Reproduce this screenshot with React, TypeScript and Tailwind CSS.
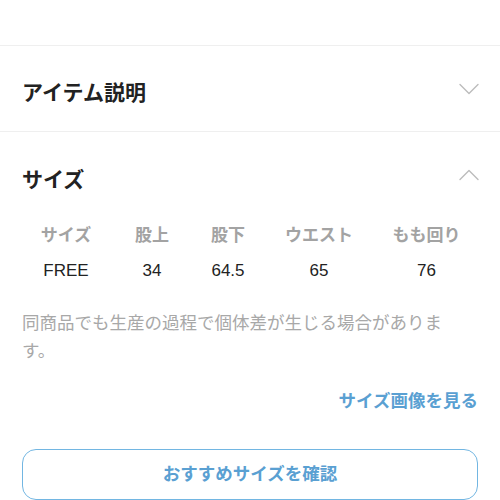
const font = {
  fontFamily: '"Liberation Sans", "Noto Sans CJK JP", sans-serif',
};

const sizeRows = [
  { label: "サイズ", value: "FREE" },
  { label: "股上", value: "34" },
  { label: "股下", value: "64.5" },
  { label: "ウエスト", value: "65" },
  { label: "もも回り", value: "76" },
];

function Chevron({ up = false }: { up?: boolean }) {
  return (
    <svg
      width="20"
      height="12"
      viewBox="0 0 20 12"
      fill="none"
      stroke="#bcbcbc"
      strokeWidth="1.4"
      strokeLinecap="round"
      strokeLinejoin="round"
      className="mr-[-1px]"
    >
      {up ? (
        <polyline points="1,10.5 10,1.5 19,10.5" />
      ) : (
        <polyline points="1,1.5 10,10.5 19,1.5" />
      )}
    </svg>
  );
}

export default function App() {
  return (
    <div className="h-[500px] w-[500px] overflow-hidden bg-white" style={font}>
      <div className="h-[46px] border-b border-[#efefef]" />

      <div className="flex h-[86px] items-center justify-between border-b border-[#efefef] px-[22px]">
        <div className="pt-[8px] text-[21px] font-bold text-[#222222]">
          アイテム説明
        </div>
        <Chevron />
      </div>

      <div className="px-[22px]">
        <div className="flex h-[86px] items-center justify-between">
          <div className="pt-[10px] text-[21px] font-bold text-[#222222]">
            サイズ
          </div>
          <Chevron up />
        </div>

        <div className="grid grid-cols-[88px_84px_68px_114px_101px]">
          {sizeRows.map((r) => (
            <div
              key={r.label}
              className="flex h-[35px] items-center justify-center text-[17px] font-semibold text-[#a3a3a3]"
            >
              {r.label}
            </div>
          ))}
          {sizeRows.map((r) => (
            <div
              key={r.label + "-v"}
              className="flex h-[35px] items-center justify-center text-[17px] text-[#222222]"
            >
              {r.value}
            </div>
          ))}
        </div>

        <p className="mt-[21px] w-[440px] text-[17.5px] leading-[28px] text-[#a8a8a8]">
          同商品でも生産の過程で個体差が生じる場合があります。
        </p>

        <div className="mt-[22px] text-right text-[17.5px] font-bold leading-[28px] text-[#5aa0d2]">
          サイズ画像を見る
        </div>

        <button className="mt-[34px] flex h-[51px] w-full items-center justify-center rounded-[14px] border-[1.5px] border-[#72b6e2] text-[17.5px] font-bold text-[#5aa0d2]">
          おすすめサイズを確認
        </button>
      </div>
    </div>
  );
}
